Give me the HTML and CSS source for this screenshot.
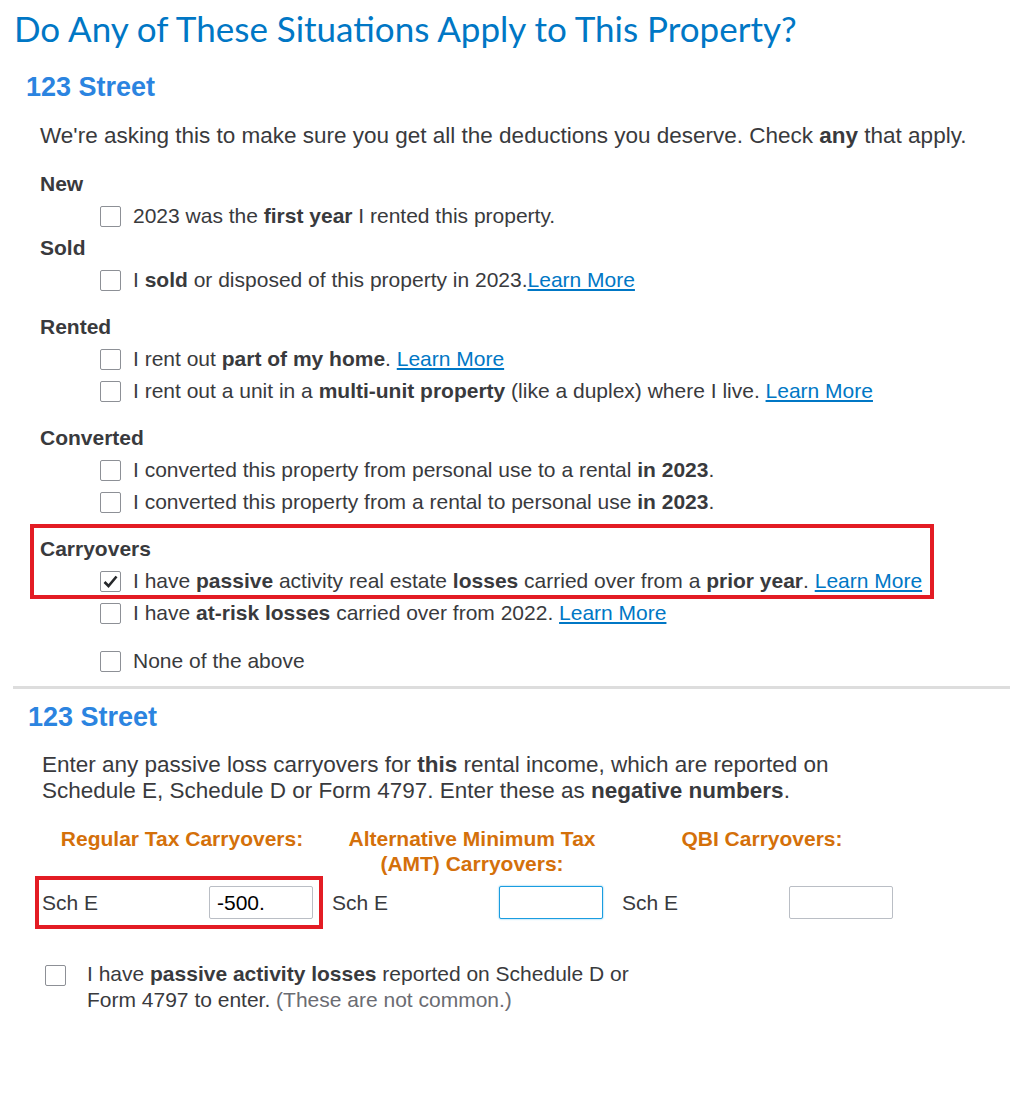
FILE: index.html
```html
<!DOCTYPE html>
<html lang="en">
<head>
  <meta charset="UTF-8" />
  <title>Rental Property Situations</title>
  <link rel="stylesheet" href="styles.css">
</head>
<body>
  <div class="page">
    <h1 class="title">Do Any of These Situations Apply to This Property?</h1>

    <h2 class="street">123 Street</h2>
    <p class="intro">We're asking this to make sure you get all the deductions you deserve. Check <b>any</b> that apply.</p>

    <div class="group first">
      <div class="group-title">New</div>
      <div class="row"><span class="box"></span><span>2023 was the <b>first year</b> I rented this property.</span></div>
    </div>
    <div class="group tight">
      <div class="group-title">Sold</div>
      <div class="row"><span class="box"></span><span>I <b>sold</b> or disposed of this property in 2023.<a href="#">Learn More</a></span></div>
    </div>
    <div class="group">
      <div class="group-title">Rented</div>
      <div class="row"><span class="box"></span><span>I rent out <b>part of my home</b>. <a href="#">Learn More</a></span></div>
      <div class="row"><span class="box"></span><span>I rent out a unit in a <b>multi-unit property</b> (like a duplex) where I live. <a href="#">Learn More</a></span></div>
    </div>
    <div class="group">
      <div class="group-title">Converted</div>
      <div class="row"><span class="box"></span><span>I converted this property from personal use to a rental <b>in 2023</b>.</span></div>
      <div class="row"><span class="box"></span><span>I converted this property from a rental to personal use <b>in 2023</b>.</span></div>
    </div>
    <div class="group boxed">
      <div class="highlight">
        <div class="group-title">Carryovers</div>
        <div class="row last"><span class="box checked"><svg width="15" height="13" viewBox="0 0 15 13"><path d="M1.5 7 L5.5 11 L13.5 1.5" fill="none" stroke="#26282b" stroke-width="2.6"/></svg></span><span>I have <b>passive</b> activity real estate <b>losses</b> carried over from a <b>prior year</b>. <a href="#">Learn More</a></span></div>
      </div>
      <div class="row"><span class="box"></span><span>I have <b>at-risk losses</b> carried over from 2022. <a href="#">Learn More</a></span></div>
    </div>
    <div class="group none">
      <div class="row"><span class="box"></span><span>None of the above</span></div>
    </div>

    <hr class="divider">

    <h2 class="street second">123 Street</h2>
    <p class="lead">Enter any passive loss carryovers for <b>this</b> rental income, which are reported on Schedule E, Schedule D or Form 4797. Enter these as <b>negative numbers</b>.</p>

    <div class="carry-grid">
      <div class="col-head">Regular Tax Carryovers:</div>
      <div class="col-head">Alternative Minimum Tax (AMT) Carryovers:</div>
      <div class="col-head">QBI Carryovers:</div>

      <div class="cell highlight-cell"><span class="cell-label">Sch E</span><input class="amount" type="text" value="-500."></div>
      <div class="cell"><span class="cell-label">Sch E</span><input class="amount focus" type="text" value=""></div>
      <div class="cell"><span class="cell-label">Sch E</span><input class="amount" type="text" value=""></div>
    </div>

    <div class="extra">
      <span class="box"></span>
      <span class="extra-text">I have <b>passive activity losses</b> reported on Schedule D or Form 4797 to enter. <span class="muted">(These are not common.)</span></span>
    </div>
  </div>
</body>
</html>
```

FILE: styles.css
```css
:root {
  --blue: #0077c5;
  --street: #2b84e0;
  --text: #393a3d;
  --orange: #d4700a;
  --red: #e31c24;
}
* { box-sizing: border-box; }
body {
  margin: 0;
  background: #fff;
  color: var(--text);
  font-family: "Liberation Sans", Arial, sans-serif;
  font-size: 21px;
}
.page { padding-left: 14px; }
b { font-weight: 700; }
a { color: var(--blue); text-decoration: underline; }

.title {
  margin: 0;
  padding-top: 8px;
  font-family: Lato, "Noto Sans", sans-serif;
  font-weight: 400;
  font-size: 35px;
  line-height: 40px;
  color: var(--blue);
}
.street {
  margin: 23px 0 0 12px;
  font-size: 27px;
  line-height: 32px;
  font-weight: 700;
  color: var(--street);
}
.intro {
  margin: 17px 0 0 26px;
  font-size: 22.5px;
  line-height: 32px;
}

.group { margin-left: 26px; margin-top: 15px; }
.group.first { margin-top: 16px; }
.group.tight { margin-top: 0; }
.group.boxed { margin-top: 6px; }
.group.none { margin-top: 16px; }
.group-title { font-weight: 700; line-height: 32px; height: 32px; }
.row {
  display: flex;
  align-items: center;
  height: 32px;
  padding-left: 60px;
  white-space: nowrap;
}
.box {
  flex: none;
  width: 21px;
  height: 21px;
  border: 1px solid #8d9096;
  border-radius: 2px;
  background: #fff;
  margin-right: 12px;
  display: inline-flex;
  align-items: center;
  justify-content: center;
}

.highlight {
  margin: 0 0 -2px -10px;
  width: 904px;
  border: 4px solid var(--red);
  padding: 5px 0 0 6px;
}
.highlight .row.last { margin-bottom: -2px; }

.divider {
  margin: 9px 0 0 -1px;
  border: 0;
  height: 3px;
  background: #dddddd;
}
.street.second { margin: 12px 0 0 14px; }
.lead {
  margin: 19px 0 0 28px;
  max-width: 840px;
  font-size: 22.5px;
  line-height: 26px;
}

.carry-grid {
  margin: 22px 0 0 23px;
  display: grid;
  grid-template-columns: 290px 290px 290px;
}
.col-head {
  text-align: center;
  color: var(--orange);
  font-weight: 700;
  font-size: 21px;
  line-height: 25px;
}
.cell {
  display: flex;
  align-items: center;
  height: 53px;
  padding-left: 5px;
}
.cell-label { width: 167px; }
.highlight-cell {
  width: 288px;
  margin-left: -2px;
  border: 4px solid var(--red);
  padding-left: 3px;
}
.amount {
  width: 104px;
  height: 33px;
  border: 1px solid #babec5;
  border-radius: 2px;
  padding: 0 7px;
  font-family: "Liberation Sans", Arial, sans-serif;
  font-size: 21px;
  color: #000;
  outline: none;
}
.amount.focus {
  border-color: #1a9de0;
  box-shadow: 0 0 2px #5fbbea;
}

.extra {
  display: flex;
  align-items: flex-start;
  margin: 32px 0 0 31px;
}
.extra .box { margin: 4px 21px 0 0; }
.extra-text { max-width: 560px; line-height: 26px; }
.muted { color: #6b6c72; }
```
